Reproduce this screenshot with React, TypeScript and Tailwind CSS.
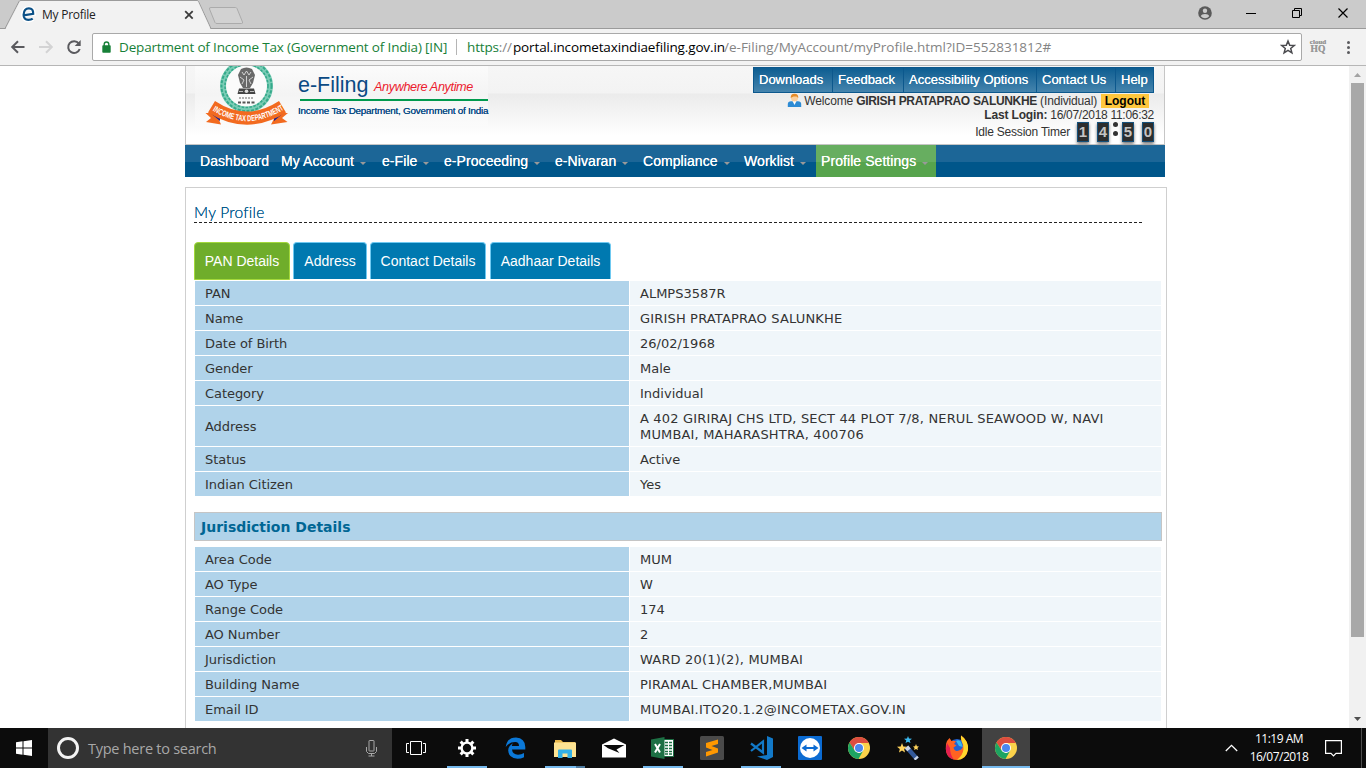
import React from "react";

const identityRows: [string, string][] = [
  ["PAN", "ALMPS3587R"],
  ["Name", "GIRISH PRATAPRAO SALUNKHE"],
  ["Date of Birth", "26/02/1968"],
  ["Gender", "Male"],
  ["Category", "Individual"],
  ["Address", "A 402 GIRIRAJ CHS LTD, SECT 44 PLOT 7/8, NERUL SEAWOOD W, NAVI MUMBAI, MAHARASHTRA, 400706"],
  ["Status", "Active"],
  ["Indian Citizen", "Yes"],
];

const jurisdictionRows: [string, string][] = [
  ["Area Code", "MUM"],
  ["AO Type", "W"],
  ["Range Code", "174"],
  ["AO Number", "2"],
  ["Jurisdiction", "WARD 20(1)(2), MUMBAI"],
  ["Building Name", "PIRAMAL CHAMBER,MUMBAI"],
  ["Email ID", "MUMBAI.ITO20.1.2@INCOMETAX.GOV.IN"],
];

function TabStrip() {
  return (
    <div className="relative flex h-[29px] shrink-0 border-b border-[#9b9b9b] bg-[#cbcbcb]">
      <svg className="absolute top-0 left-0" width="250" height="29" viewBox="0 0 250 29">
        <path d="M0 28.5H5L19 1.5Q19.500 0.500 21 0.500H197Q198 0.500 198.500 1.500L211 28.500H250" fill="none" stroke="#9b9b9b" />
        <path d="M5.500 29L19.500 2Q20 1 21 1H197Q197.800 1 198 1.500L210.500 29Z" fill="#f2f2f2" />
        <path d="M211 7.500H235.500Q236.500 7.500 237 8.500L242.500 22Q243 23.500 241.500 23.500H217Q215.500 23.500 215 22.500L209.500 9Q209 7.500 211 7.500Z" fill="#d2d2d2" stroke="#ababab" />
        <path d="M23.300 15.300L34 13.800Q33.700 8.300 28.900 8.300Q23.300 8.300 22.900 14.800Q23 20.400 28.300 20.400Q31.200 20.400 33 18.900" fill="none" stroke="#fff" strokeWidth="4" />
        <path d="M23.300 15.300L33.200 13.800Q33.400 8.300 28.900 8.300Q23.900 8.300 23.600 14.800Q23.600 19.800 28.300 19.800Q31.200 19.800 32.700 18.600" fill="none" stroke="#0b5086" strokeWidth="2.200" />
        <path d="M185.200 11.200L192.700 18.700M192.700 11.200L185.200 18.700" stroke="#3c3c3c" strokeWidth="1.800" />
      </svg>
      <div className="relative ml-[42px] pt-[7px] font-['Open_Sans',sans-serif] text-[12px] leading-[16px] tracking-[-0.25px] text-[#222]">My Profile</div>
      <svg className="absolute top-0 right-0" width="176" height="28" viewBox="1190 0 176 28">
        <circle cx="1205" cy="13" r="6.800" fill="#5a5a5a" />
        <circle cx="1205" cy="10.700" r="2.200" fill="#cbcbcb" />
        <path d="M1200.800 16.300Q1201.500 13.900 1205 13.900Q1208.500 13.900 1209.200 16.300Q1207.500 18.300 1205 18.300Q1202.500 18.300 1200.800 16.300Z" fill="#cbcbcb" />
        <path d="M1246 13.500H1256M1292.500 10.500H1299.500V17.500H1292.500ZM1294.500 10.500V8.500H1301.500V15.500H1299.500" fill="none" stroke="#000" />
        <path d="M1338.500 8.500L1347.500 17.500M1347.500 8.500L1338.500 17.500" stroke="#000" strokeWidth="1.200" />
      </svg>
    </div>
  );
}

function Toolbar() {
  return (
    <div className="flex h-[37px] shrink-0 border-b border-[#b6b6b6] bg-[#f2f2f2] pt-[4px]">
      <svg className="shrink-0" width="92" height="28" viewBox="0 33 92 28" fill="none">
        <path d="M24.500 47H12.500M18 41.200L12.200 47L18 52.800" stroke="#5a5a5e" strokeWidth="2" />
        <path d="M39 47H51.500M46 41.200L51.800 47L46 52.800" stroke="#d3d3d4" strokeWidth="2" />
        <path d="M78.800 43.500A5.900 5.900 0 1 0 79.700 49" stroke="#5a5a5e" strokeWidth="2" />
        <path d="M80.700 40V46H74.700Z" fill="#5a5a5e" />
      </svg>
      <div className="flex h-[28px] w-[1210px] items-center rounded-[2px] border border-[#a9a9a9] bg-white font-['Open_Sans',sans-serif] text-[13.500px] leading-[20px] whitespace-nowrap">
        <svg className="ml-[9px] shrink-0" width="9" height="12" viewBox="0 0 9 12">
          <path d="M2.200 5V3.200Q2.200 1 4.500 1T6.800 3.200V5" fill="none" stroke="#178038" strokeWidth="1.400" />
          <rect x="0.300" y="4.300" width="8.400" height="7.400" rx="0.800" fill="#178038" />
        </svg>
        <span className="ml-[8px] w-[337px] tracking-[-0.16px] text-[#178038]">Department of Income Tax (Government of India) [IN]</span>
        <span className="h-[16px] w-px bg-[#b5b5b5]" />
        <span className="ml-[10px] flex grow text-[#848484]">
          <span className="w-[46px] tracking-[-0.15px]"><span className="text-[#178038]">https</span>://</span>
          <span className="w-[211px] tracking-[-0.14px] text-black">portal.incometaxindiaefiling.gov.in</span>
          <span>/e-Filing/MyAccount/myProfile.html?ID=552831812#</span>
        </span>
        <svg className="mr-[5px] shrink-0" width="16" height="16" viewBox="0 0 16 16">
          <path d="M8 2L9.700 6.200L14.200 6.500L10.700 9.400L11.900 13.800L8 11.400L4.100 13.800L5.300 9.400L1.800 6.500L6.300 6.200Z" fill="none" stroke="#4b4b4f" strokeWidth="1.500" />
        </svg>
      </div>
      <div className="flex w-[32px] flex-col items-center pt-[6px] font-['Liberation_Serif',serif] font-bold text-[#999] [text-shadow:0_0_0.500px_#999]">
        <span className="text-[7px] leading-[6px]">cloud</span>
        <span className="text-[9.500px] leading-[8px]">HQ</span>
      </div>
      <div className="flex w-[28px] flex-col items-center gap-[2px] pt-[8px]">
        <i className="size-[3px] rounded-full bg-[#5a5a5e]" />
        <i className="size-[3px] rounded-full bg-[#5a5a5e]" />
        <i className="size-[3px] rounded-full bg-[#5a5a5e]" />
      </div>
    </div>
  );
}

function Emblem() {
  return (
    <svg className="shrink-0" width="84" height="60" viewBox="205 66 84 60">
      <ellipse cx="246.500" cy="86" rx="23.500" ry="23.500" fill="none" stroke="#7accb5" strokeWidth="6" />
      <ellipse cx="246.500" cy="86" rx="25" ry="25" fill="none" stroke="#35a98b" strokeWidth="2" strokeDasharray="3 1.500" />
      <ellipse cx="246.500" cy="86" rx="21.500" ry="21.500" fill="none" stroke="#35a98b" strokeWidth="1.600" strokeDasharray="2.500 1.500" />
      <ellipse cx="246.500" cy="86" rx="20" ry="20" fill="#fbfbfb" />
      <path d="M241 69Q246.500 66 252 69L255 75L253 83L250 88H243L240 83L238 75Z" fill="#696969" />
      <path d="M242 72L244 75L246.500 71L249 75L251 72M240 77L244 80L242 84M253 77L249 80L251 84M246.500 76V87" fill="none" stroke="#ddd" strokeWidth="0.900" />
      <path d="M239 88.500H254L255.500 94H237.500Z" fill="#454545" />
      <circle cx="246.500" cy="91.200" r="1.800" fill="#ddd" />
      <path d="M239 91.500H243M250 91.500H254" stroke="#bbb" />
      <path d="M239 98H254" stroke="#666" strokeDasharray="2 1" />
      <path d="M238 102.500H255" stroke="#555" strokeWidth="2" strokeDasharray="3 1.500" />
      <path d="M205.500 113L216 113L221 124.500L206 122L211 118Z" fill="#f26a1f" />
      <path d="M288 113L277 113L271 124.500L287.500 122L282 118Z" fill="#f26a1f" />
      <path d="M211 113.500L220 113V121ZM283 113.500L274 113V121Z" fill="#12209a" />
      <path d="M215 101Q246.500 122 279 101L286 112.500Q247 137 208 112.500Z" fill="#f26a1f" />
      <path id="ribbon" d="M212.500 110.500Q247 132 283 110" fill="none" />
      <text fontFamily="Liberation Sans, sans-serif" fontSize="8.500" fontWeight="700" fill="#fff">
        <textPath href="#ribbon" textLength="76" lengthAdjust="spacingAndGlyphs">INCOME TAX DEPARTMENT</textPath>
      </text>
    </svg>
  );
}

const quickLinks: [string, string][] = [
  ["Downloads", "w-[78px]"],
  ["Feedback", "w-[71px]"],
  ["Accessibility Options", "w-[133px]"],
  ["Contact Us", "w-[79px]"],
  ["Help", "w-[38px]"],
];

function Digit({ value, gap }: { value: string; gap: string }) {
  return (
    <span className={`${gap} flex h-[20px] w-[12px] items-center justify-center border border-[#15507a] bg-[#2d2d2d] text-[15px] font-bold text-[#c4c4c4] shadow-[0_2px_3px_#777]`}>
      {value}
    </span>
  );
}

function Header() {
  return (
    <header className="flex h-[79px] w-[980px] justify-between border border-t-0 border-[#c6c6c6] bg-[linear-gradient(#f6f6f6_0px,#f3f3f3_27px,#ebebeb_28px,#ffffff_70px)] font-['Liberation_Sans',sans-serif]">
      <div className="ml-[9px] flex h-[60px] w-[293px] bg-[linear-gradient(#fbfbfb,#f4f4f4_28px,#fbfbfb)] pl-[10px]">
        <Emblem />
        <div className="ml-[9px] w-[192px] whitespace-nowrap">
          <div className="flex h-[33px] items-baseline pt-[6px]">
            <span className="w-[76px] text-[21.500px] leading-[27px] text-[#0a4a84]">e-Filing</span>
            <span className="relative -top-px text-[12.700px] tracking-[-0.4px] text-[#ec1b2e] italic">Anywhere Anytime</span>
          </div>
          <div className="ml-[2px] h-[2px] w-[188px] bg-[#009a4e]" />
          <div className="mt-[3px] text-[9.900px] leading-[14px] tracking-[-0.22px] text-[#0a4a84] [text-shadow:0_0_0.500px_#0a4a84]">Income Tax Department, Government of India</div>
        </div>
      </div>
      <div className="mr-[10px] flex flex-col items-end pt-px text-[12px] text-[#333]">
        <div className="flex h-[26px] border border-[#0c588d] bg-[linear-gradient(#0d5d91,#4584ad)] text-[13px] leading-[23px] text-white [text-shadow:0_0_0.500px_#fff]">
          {quickLinks.map(([label, width], i) => (
            <span key={label} className={`${width} ${i ? "border-l border-[#0c588d]" : ""} pl-[5px] whitespace-nowrap`}>{label}</span>
          ))}
        </div>
        <div className="mr-[5px] flex h-[15px] items-center whitespace-nowrap">
          <svg width="15" height="15" viewBox="0 0 15 15">
            <path d="M0.800 14V11Q1 8.300 4 8.300H11Q14 8.300 14.200 11V14Z" fill="#2d8bd4" />
            <path d="M5.500 8L7.500 12L9.500 8Z" fill="#fff" />
            <circle cx="7.500" cy="4.800" r="3.600" fill="#fbcf9c" />
            <path d="M3.700 5Q3.500 0.700 7.500 0.700T11.300 5L9.500 3.500L6.500 3.600L4.500 4.500Z" fill="#e68b26" />
          </svg>
          <span className="ml-[2px] tracking-[-0.15px]">Welcome <b className="tracking-[-0.33px]">GIRISH PRATAPRAO SALUNKHE</b> (Individual)</span>
          <b className="ml-[4px] h-[14px] w-[48px] bg-[#ffc73d] text-center leading-[15px] text-black">Logout</b>
        </div>
        <div className="h-[14px] leading-[14px] tracking-[-0.29px]"><b className="tracking-[-0.15px]">Last Login:</b> 16/07/2018 11:06:32</div>
        <div className="flex h-[20px] items-center">
          <span className="mr-[7px] tracking-[-0.22px]">Idle Session Timer</span>
          <Digit value="1" gap="" />
          <Digit value="4" gap="ml-[8px]" />
          <span className="flex w-[13px] flex-col items-center gap-[4px] pb-[7px]">
            <i className="size-[5px] rounded-full bg-[#333]" />
            <i className="size-[5px] rounded-full bg-[#333]" />
          </span>
          <Digit value="5" gap="" />
          <Digit value="0" gap="ml-[8px]" />
        </div>
      </div>
    </header>
  );
}

const menu: [string, string][] = [
  ["My Account", "w-[101px]"],
  ["e-File", "w-[62px]"],
  ["e-Proceeding", "w-[111px]"],
  ["e-Nivaran", "w-[88px]"],
  ["Compliance", "w-[101px]"],
  ["Worklist", "w-[72px]"],
  ["Profile Settings", "w-[120px] bg-[linear-gradient(#67ae60_17px,#57a44d_17px)] pl-[5px]"],
];

function NavBar() {
  return (
    <nav className="flex h-[32px] w-[980px] bg-[linear-gradient(#1c6697_17px,#00568a_17px)] pl-[15px] font-['Liberation_Sans',sans-serif] text-[14px] leading-[32px] tracking-[0.07px] whitespace-nowrap text-white [text-shadow:0_0_0.500px_#fff]">
      <span className="w-[81px]">Dashboard</span>
      {menu.map(([label, look]) => (
        <span key={label} className={`${look} flex`}>
          {label}
          <svg className="mt-[17px] ml-[6px] shrink-0" width="6" height="3" viewBox="0 0 6 3"><path d="M0 0H6L3 3Z" fill="#999" /></svg>
        </span>
      ))}
    </nav>
  );
}

const tabs: [string, string][] = [
  ["PAN Details", "w-[96px] h-[38px] mr-[3px] border-[#a3d83b] bg-[#6fad2b] border-b"],
  ["Address", "w-[74px] h-[37px] mr-[3px] border-[#6fc9f1] bg-[#0079b0]"],
  ["Contact Details", "w-[116px] h-[37px] mr-[4px] border-[#6fc9f1] bg-[#0079b0]"],
  ["Aadhaar Details", "w-[121px] h-[37px] border-[#6fc9f1] bg-[#0079b0]"],
];

function DetailRows({ rows }: { rows: [string, string][] }) {
  return (
    <div className="ml-[9px] flex w-[966px] flex-col gap-px">
      {rows.map(([label, value]) => (
        <div key={label} className="flex gap-px leading-[16px]">
          <div className="flex w-[434px] items-center bg-[#b0d3ea] pt-[5px] pb-[3px] pl-[10px] tracking-[-0.06px]">{label}</div>
          <div className={`w-[531px] bg-[#f0f6fa] pt-[5px] pr-[40px] pb-[3px] pl-[10px] ${value.length > 10 ? "tracking-[0.17px]" : ""}`}>{value}</div>
        </div>
      ))}
    </div>
  );
}

function Profile() {
  return (
    <main className="mt-[10px] h-[700px] w-[982px] border border-[#cfcfcf] bg-white font-['DejaVu_Sans',sans-serif] text-[13px] text-[#333]">
      <h1 className="ml-[8px] h-[35px] w-[948px] border-b border-dashed border-[#222] pt-[14px] font-['Lato',sans-serif] text-[15.500px] leading-[20px] font-light tracking-[0.25px] text-[#00568a] [text-shadow:0_0_0.500px_#00568a]">My Profile</h1>
      <div className="mt-[19px] ml-[8px] flex h-[38px] font-['Liberation_Sans',sans-serif] text-[14px] leading-[37px] text-white">
        {tabs.map(([label, look]) => (
          <div key={label} className={`${look} rounded-t-[4px] border-x border-t text-center whitespace-nowrap`}>{label}</div>
        ))}
      </div>
      <div className="mt-px"><DetailRows rows={identityRows} /></div>
      <h2 className="mt-[16px] mb-[6px] ml-[8px] h-[29px] w-[968px] border border-[#c5c5c5] bg-[#b0d3ea] pt-px pl-[6px] text-[14px] leading-[27px] font-bold text-[#006694]">Jurisdiction Details</h2>
      <DetailRows rows={jurisdictionRows} />
    </main>
  );
}

function ScrollBar() {
  return (
    <div className="flex w-[17px] shrink-0 flex-col items-center bg-[#f1f1f1]">
      <svg className="shrink-0" width="17" height="17" viewBox="0 0 17 17"><path d="M8.500 7L12 11H5Z" fill="#a3a3a3" /></svg>
      <div className="h-[554px] w-[13px] bg-[#a8a8a8]" />
      <svg className="mt-auto shrink-0" width="17" height="17" viewBox="0 0 17 17"><path d="M5 6H12L8.500 10Z" fill="#505050" /></svg>
    </div>
  );
}

function ChromeIcon() {
  return (
    <svg width="24" height="24" viewBox="0 0 24 24">
      <circle cx="12" cy="12" r="11" fill="#fbd24a" />
      <path d="M2.470 6.500A11 11 0 0 1 21.530 6.500L21.800 7H12L7.700 14.500Z" fill="#dc4d3f" />
      <path d="M2.470 6.500A11 11 0 0 0 11.500 23L16.300 14.500L12 17L7.700 14.500Z" fill="#1da462" />
      <circle cx="12" cy="12" r="5" fill="#fff" />
      <circle cx="12" cy="12" r="4" fill="#4a87ee" />
    </svg>
  );
}

const taskIcons: { id: string; bar: string; icon: React.ReactNode }[] = [
  {
    id: "settings", bar: "full", icon: (
      <svg width="20" height="20" viewBox="-10 -10 20 20">
        {[0, 45, 90, 135, 180, 225, 270, 315].map((a) => (
          <rect key={a} x="-1.500" y="-9" width="3" height="4" fill="#fff" transform={`rotate(${a})`} />
        ))}
        <circle r="5.400" fill="none" stroke="#fff" strokeWidth="2.400" />
      </svg>
    ),
  },
  {
    id: "edge", bar: "", icon: (
      <svg width="21" height="22" viewBox="0 0 21 22">
        <path d="M0.700 10Q2 0.500 11 0.500Q20 1 20.300 10V12.500H7Q7.500 17.500 13 17.700Q16.500 17.500 19 16V20.200Q16 21.700 12.500 21.700Q3.500 21.200 3.200 13.500Q3.400 8.700 8 6.200Q6.800 7.600 6.800 9H14Q14 5.200 10.300 5.100Q4.500 5 0.700 10Z" fill="#0b78d7" />
      </svg>
    ),
  },
  {
    id: "explorer", bar: "split", icon: (
      <svg width="22" height="19" viewBox="0 0 22 19">
        <path d="M1 1H7L9 3H21V17H1Z" fill="#e9b84a" />
        <path d="M0 3.500H22V18H0Z" fill="#fde392" />
        <path d="M4 19V11.500Q4 10.500 5 10.500H17Q18 10.500 18 11.500V19H13.500V14.500H8.500V19Z" fill="#34b1e6" />
      </svg>
    ),
  },
  {
    id: "mail", bar: "", icon: (
      <svg width="24" height="20" viewBox="0 0 24 20">
        <path d="M0 6.500L12 0.500L24 6.500V19.500H0Z" fill="#fff" />
        <path d="M1.500 7H22.500L14.500 11.500L17.500 15L6 10.200Z" fill="#0b0b0b" />
      </svg>
    ),
  },
  {
    id: "excel", bar: "full", icon: (
      <svg width="23" height="22" viewBox="0 0 23 22">
        <path d="M12 2.500H22.500V19.500H12Z" fill="#fff" stroke="#1d7044" />
        <path d="M14 5.500H21M14 8.500H21M14 11.500H21M14 14.500H21M14 17H21" stroke="#1d7044" strokeWidth="1.600" />
        <path d="M17.500 4V18" stroke="#fff" />
        <path d="M0 2.500L13.500 0V22L0 19.500Z" fill="#1d7044" />
        <path d="M4 7L9 15.500M9 7L4 15.500" stroke="#fff" strokeWidth="2" />
      </svg>
    ),
  },
  {
    id: "sublime", bar: "", icon: (
      <svg width="24" height="24" viewBox="0 0 24 24">
        <rect width="24" height="24" rx="1.500" fill="#4a4a4a" />
        <path d="M6 7L18 3.500V8L11.500 10L18 12.500V16.500L6 20.500V16L12.500 14L6 11.500Z" fill="#ff9800" />
      </svg>
    ),
  },
  {
    id: "code", bar: "full", icon: (
      <svg width="24" height="24" viewBox="0 0 24 24">
        <path d="M18 0L24 2.500V21L18 24L8 20.500L18 19Z" fill="#1279c8" />
        <path d="M2 7.500L14 16.500V5.500L2 15" fill="none" stroke="#1279c8" strokeWidth="2.200" />
      </svg>
    ),
  },
  {
    id: "teamviewer", bar: "", icon: (
      <svg width="24" height="24" viewBox="0 0 24 24">
        <rect width="24" height="24" rx="1" fill="#0b6bd2" />
        <circle cx="12" cy="12" r="10" fill="#fff" />
        <path d="M3.500 12L8.500 8.500V11H15.500V8.500L20.500 12L15.500 15.500V13H8.500V15.500Z" fill="#0b6bd2" />
      </svg>
    ),
  },
  { id: "chrome", bar: "", icon: <ChromeIcon /> },
  {
    id: "wand", bar: "", icon: (
      <svg width="24" height="24" viewBox="0 0 24 24">
        <path d="M10.500 11L21 23" stroke="#33599a" strokeWidth="4.500" />
        <path d="M10.500 11L13 13.900M19.500 21.300L21 23" stroke="#ccd5e5" strokeWidth="4.500" />
        <path d="M12 0L13 2.500L16 2.700L13.700 4.500L14.500 7L12 5.700L9.500 7L10.300 4.500L8 2.700L11 2.500Z" fill="#3bbaf1" />
        <path d="M6 7L7.300 10.500L11 10.800L8.200 13L9 16.500L6 14.500L3 16.500L3.800 13L1 10.800L4.700 10.500ZM20 8L20.900 10.300L23 10.500L21.400 12L22 14L20 13L18 14L18.600 12L17 10.500L19.100 10.300Z" fill="#ffd35c" />
      </svg>
    ),
  },
  {
    id: "firefox", bar: "", icon: (
      <svg width="24" height="26" viewBox="0 0 24 26">
        <circle cx="12" cy="13" r="9" fill="#2262d3" />
        <path d="M11 6Q14 4 16 7L18 12L14 11Z" fill="#35b6f2" />
        <path d="M2 6L4.500 3L6.500 6Q9 5.500 11 6.500L9 9L11.500 10.500L8.500 12.500Q9.500 17 14 15.500Q19 14 17.500 8Q15.500 4 16 0.500Q23 5 23 14Q22 24.500 12 25Q1 24.500 0.800 13Q0.800 8 2 6Z" fill="#ff6322" />
        <path d="M16 0.500Q24 6 23 15Q21 24.500 12 25Q18 20 18.500 14Q18.500 9 16.500 6Q15.500 3 16 0.500Z" fill="#ffd72d" />
        <path d="M0.800 14Q1.500 23 9 24.700Q5 20 5 13L2 8Z" fill="#e51f50" />
      </svg>
    ),
  },
  { id: "chrome-active", bar: "active", icon: <ChromeIcon /> },
];

function TaskBar() {
  return (
    <footer className="flex h-[40px] shrink-0 bg-[#0c0c0c] font-['Open_Sans',sans-serif]">
      <div className="flex w-[48px] items-center justify-center">
        <svg width="16" height="16" viewBox="0 0 16 16"><path d="M0 2.300L6.500 1.300V7.500H0ZM7.500 1.200L16 0V7.500H7.500ZM0 8.500H6.500V14.700L0 13.700ZM7.500 8.500H16V16L7.500 14.800Z" fill="#fff" /></svg>
      </div>
      <div className="flex w-[344px] items-center bg-[#333] pl-[9px]">
        <span className="size-[22px] rounded-full border-[3px] border-[#f3f3f3]" />
        <span className="ml-[9px] grow pt-px text-[14.500px] tracking-[-0.26px] text-[#a8a8a8]">Type here to search</span>
        <svg className="mr-[14px]" width="13" height="17" viewBox="0 0 13 17" fill="none" stroke="#a8a8a8">
          <rect x="4" y="0.500" width="5" height="10.500" rx="0.500" />
          <path d="M1.500 7V11.500L3.500 13.500H9.500L11.500 11.500V7M6.500 13.500V16M3.500 16H9.500" />
        </svg>
      </div>
      <div className="flex w-[51px] items-center pl-[14px]">
        <svg width="21" height="16" viewBox="0 0 21 16" fill="none" stroke="#fff"><path d="M4.500 1.500H15.500V14.500H4.500ZM3 3.500H0.500V12.500H3M17 3.500H19.500V12.500H17" /></svg>
      </div>
      <div className="flex gap-px">
        {taskIcons.map(({ id, bar, icon }) => (
          <div key={id} className={`flex w-[48px] flex-col ${bar === "active" ? "bg-[#424242]" : ""}`}>
            <div className="flex h-[38px] items-center justify-center pt-[2px] pr-px">{icon}</div>
            {bar === "full" && <div className="mx-[4px] h-[2px] bg-[#76b9ed]" />}
            {bar === "active" && <div className="h-[2px] bg-[#76b9ed]" />}
            {bar === "split" && (
              <div className="mx-[4px] flex h-[2px]"><i className="w-[31px] bg-[#76b9ed]" /><i className="w-[9px] bg-[#4e7ba0]" /></div>
            )}
          </div>
        ))}
      </div>
      <div className="flex grow items-center justify-end text-white">
        <svg width="13" height="8" viewBox="0 0 13 8" fill="none" stroke="#fff" strokeWidth="1.300"><path d="M0.800 7L6.500 1.300L12.200 7" /></svg>
        <div className="mr-[9px] ml-[10px] flex w-[62px] flex-col items-center text-[12px] leading-[18px] tracking-[-0.5px] whitespace-nowrap">
          <span>11:19 AM</span>
          <span>16/07/2018</span>
        </div>
        <svg className="mr-[19px] ml-[6px]" width="17" height="17" viewBox="0 0 17 17" fill="none" stroke="#fff" strokeWidth="1.200"><path d="M0.600 0.600H16.400V13.400H11L8.500 16L6 13.400H0.600Z" /></svg>
        <i className="mr-[4px] h-full w-px bg-[#4d4d4d]" />
      </div>
    </footer>
  );
}

export default function App() {
  return (
    <div className="flex h-[768px] w-[1366px] flex-col overflow-hidden bg-white">
      <TabStrip />
      <Toolbar />
      <div className="flex min-h-0 grow">
        <div className="min-w-0 grow overflow-hidden pl-[185px]">
          <Header />
          <NavBar />
          <Profile />
        </div>
        <ScrollBar />
      </div>
      <TaskBar />
    </div>
  );
}
